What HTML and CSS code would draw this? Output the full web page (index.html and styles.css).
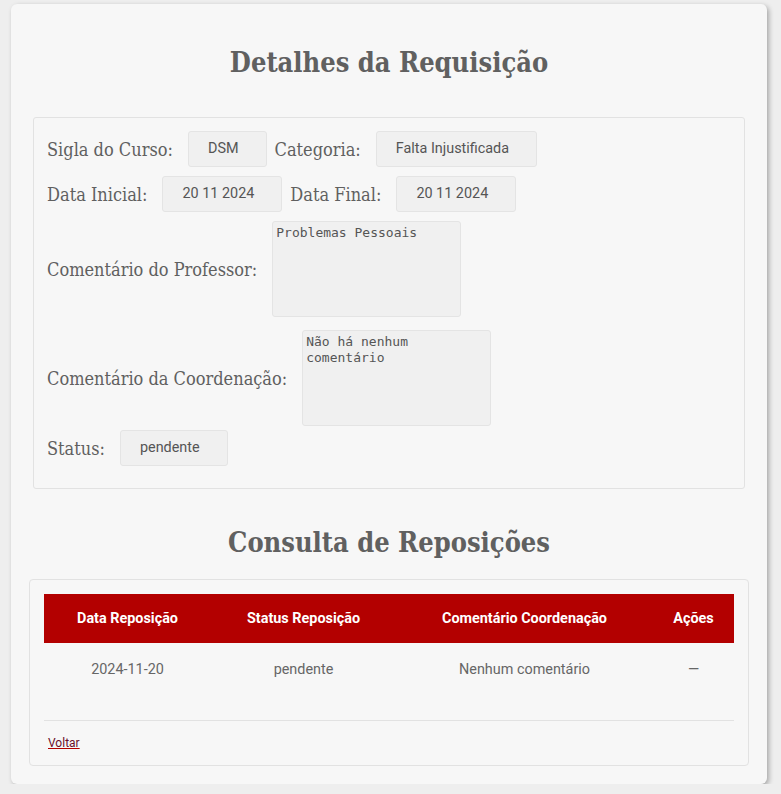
FILE: index.html
```html
<!DOCTYPE html>
<html lang="pt-BR">
<head>
    <meta charset="UTF-8">
    <meta name="viewport" content="width=device-width, initial-scale=1.0">
    <title>Detalhes da Requisição</title>
    <link rel="stylesheet" href="styles.css">
</head>

<body>
    <div class="card">
        <h1 class="title">Detalhes da Requisição</h1>

        <div class="details">
            <div class="row">
                <label>Sigla do Curso:</label>
                <span class="field">DSM</span>
                <label>Categoria:</label>
                <span class="field">Falta Injustificada</span>
            </div>
            <div class="row">
                <label>Data Inicial:</label>
                <span class="field">20 11 2024</span>
                <label>Data Final:</label>
                <span class="field">20 11 2024</span>
            </div>
            <div class="row">
                <label>Comentário do Professor:</label>
                <textarea class="comment" readonly>Problemas Pessoais</textarea>
            </div>
            <div class="row row-wide">
                <label>Comentário da Coordenação:</label>
                <textarea class="comment" readonly>Não há nenhum comentário</textarea>
            </div>
            <div class="row row-tight">
                <label>Status:</label>
                <span class="field">pendente</span>
            </div>
        </div>

        <h2 class="title">Consulta de Reposições</h2>

        <div class="panel">
            <table class="reposicoes">
                <thead>
                    <tr>
                        <th class="col-data">Data Reposição</th>
                        <th class="col-status">Status Reposição</th>
                        <th class="col-coment">Comentário Coordenação</th>
                        <th class="col-acoes">Ações</th>
                    </tr>
                </thead>
                <tbody>
                    <tr>
                        <td>2024-11-20</td>
                        <td>pendente</td>
                        <td>Nenhum comentário</td>
                        <td>—</td>
                    </tr>
                </tbody>
            </table>
            <div class="panel-footer">
                <a href="#">Voltar</a>
            </div>
        </div>
    </div>
</body>
</html>
```

FILE: styles.css
```css
body {
    margin: 0;
    padding: 4px 0 0 11px;
    background: #eeeeee;
    font-family: Roboto, 'Liberation Sans', sans-serif;
    color: #606060;
}

.card {
    width: 756px;
    box-sizing: border-box;
    background: #f7f7f7;
    border-radius: 6px;
    box-shadow: 2px 2px 5px rgba(0, 0, 0, 0.3);
    padding: 42px 18px 18px;
}

.title {
    margin: 0;
    text-align: center;
    font-family: 'DejaVu Serif Condensed', 'DejaVu Serif', serif;
    font-weight: bold;
    font-size: 27px;
    line-height: 34px;
    color: #606060;
}

.details {
    margin: 37px 4px 0;
    padding: 13px 14px 22px 13px;
    border: 1px solid #e2e2e2;
    border-radius: 3px;
}

.row {
    display: flex;
    align-items: center;
    margin-top: 9px;
}

.row:first-child {
    margin-top: 0;
}

.row-wide {
    margin-top: 13px;
}

.row-tight {
    margin-top: 4px;
}

.row label {
    font-family: 'DejaVu Serif Condensed', 'DejaVu Serif', serif;
    font-size: 18px;
    color: #606060;
    margin-right: 15px;
}

.field {
    display: inline-block;
    height: 36px;
    line-height: 34px;
    box-sizing: border-box;
    padding: 0 27px 0 19px;
    margin-right: 8px;
    background: #f0f0f0;
    border: 1px solid #e4e4e4;
    border-radius: 3px;
    font-size: 14.4px;
    color: #555;
}

.comment {
    width: 189px;
    height: 96px;
    box-sizing: border-box;
    padding: 3px;
    margin: 0;
    resize: none;
    background: #f0f0f0;
    border: 1px solid #e4e4e4;
    border-radius: 3px;
    font-family: 'DejaVu Sans Mono', monospace;
    font-size: 13px;
    line-height: 16px;
    color: #555;
}

h2.title {
    margin-top: 37px;
}

.panel {
    margin-top: 19px;
    padding: 14px 14px 0;
    border: 1px solid #e2e2e2;
    border-radius: 4px;
}

.reposicoes {
    width: 100%;
    border-collapse: collapse;
    font-size: 14.4px;
}

.reposicoes th {
    background: #b30000;
    color: #fff;
    font-weight: bold;
    height: 49px;
    padding: 0 8px;
}

.reposicoes td {
    height: 50px;
    text-align: center;
    color: #666;
}

.col-data { width: 151px; }
.col-status { width: 169px; }
.col-coment { width: 241px; }

.panel-footer {
    margin-top: 25px;
    border-top: 1px solid #e2e2e2;
    padding: 11px 4px 14px;
}

.panel-footer a {
    color: #6a0f2a;
    font-size: 12px;
    text-decoration: underline;
    text-decoration-color: #b30000;
}
```
